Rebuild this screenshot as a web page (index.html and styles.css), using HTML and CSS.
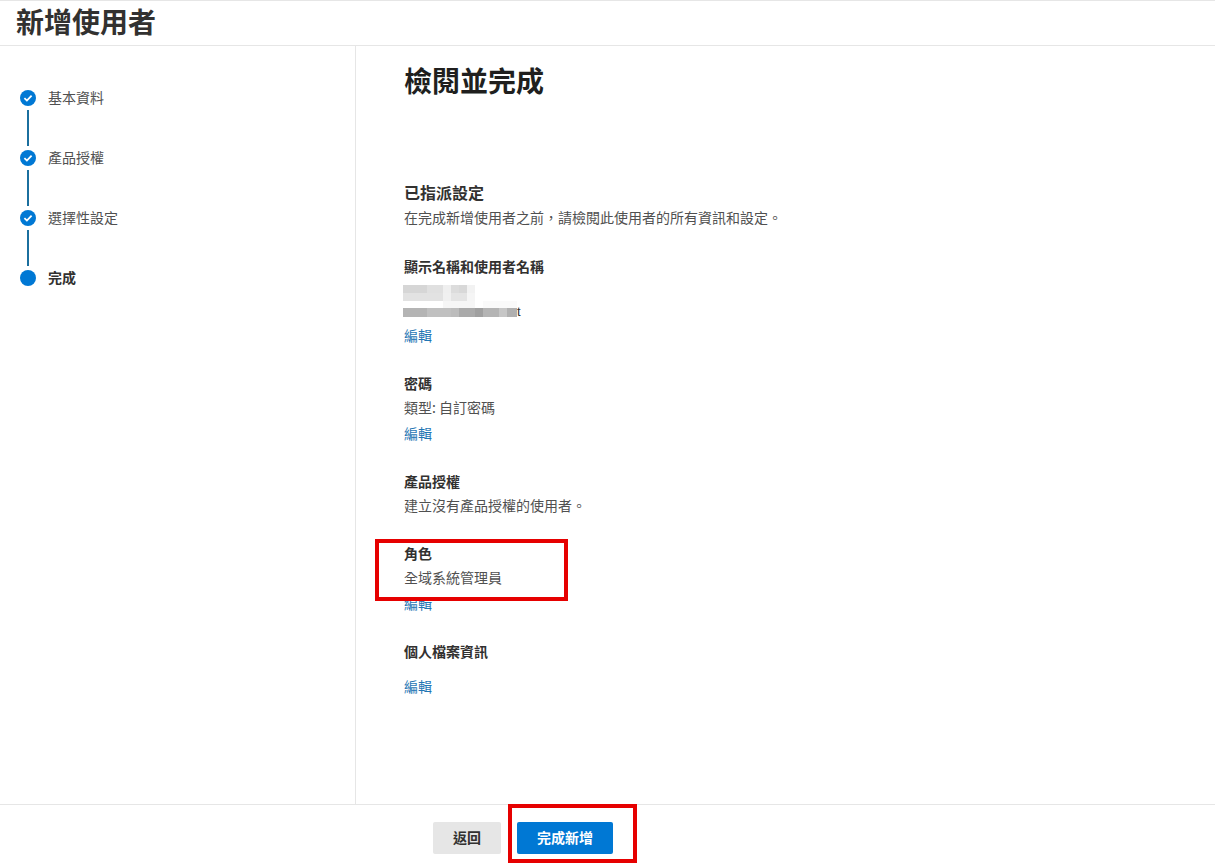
FILE: index.html
```html
<!DOCTYPE html>
<html lang="zh-Hant">
<head>
    <meta charset="UTF-8">
    <meta name="viewport" content="width=device-width, initial-scale=1.0">
    <title>新增使用者</title>
    <link rel="stylesheet" href="styles.css">
</head>
<body>
    <header class="topbar">
        <h1>新增使用者</h1>
    </header>

    <div class="wrapper">
        <aside class="sidebar">
            <ol class="steps">
                <li class="step done">
                    <span class="dot"><svg viewBox="0 0 16 16" width="16" height="16"><path d="M4.4 8.2l2.5 2.4 4.7-4.9" fill="none" stroke="#fff" stroke-width="1.8"/></svg></span>
                    <span class="step-label">基本資料</span>
                </li>
                <li class="step done">
                    <span class="dot"><svg viewBox="0 0 16 16" width="16" height="16"><path d="M4.4 8.2l2.5 2.4 4.7-4.9" fill="none" stroke="#fff" stroke-width="1.8"/></svg></span>
                    <span class="step-label">產品授權</span>
                </li>
                <li class="step done">
                    <span class="dot"><svg viewBox="0 0 16 16" width="16" height="16"><path d="M4.4 8.2l2.5 2.4 4.7-4.9" fill="none" stroke="#fff" stroke-width="1.8"/></svg></span>
                    <span class="step-label">選擇性設定</span>
                </li>
                <li class="step current">
                    <span class="dot"></span>
                    <span class="step-label">完成</span>
                </li>
            </ol>
        </aside>

        <main class="content">
            <h2>檢閱並完成</h2>

            <h3>已指派設定</h3>
            <p>在完成新增使用者之前，請檢閱此使用者的所有資訊和設定。</p>

            <section class="block first">
                <h4>顯示名稱和使用者名稱</h4>
                <div class="blur-name"></div>
                <div class="blur-mail"><span class="blur-bar"></span><span class="blur-end">t</span></div>
                <a class="edit" href="#">編輯</a>
            </section>

            <section class="block">
                <h4>密碼</h4>
                <p>類型: 自訂密碼</p>
                <a class="edit" href="#">編輯</a>
            </section>

            <section class="block">
                <h4>產品授權</h4>
                <p>建立沒有產品授權的使用者。</p>
            </section>

            <section class="block">
                <h4>角色</h4>
                <p>全域系統管理員</p>
                <a class="edit" href="#">編輯</a>
            </section>

            <section class="block">
                <h4>個人檔案資訊</h4>
                <a class="edit spaced" href="#">編輯</a>
            </section>
        </main>
    </div>

    <footer class="actions">
        <button class="btn">返回</button>
        <button class="btn primary">完成新增</button>
    </footer>

    <div class="mark mark-role"></div>
    <div class="mark mark-finish"></div>
</body>
</html>
```

FILE: styles.css
```css
* {
    box-sizing: border-box;
}
html, body {
    height: 100%;
}
body {
    font-family: "Noto Sans CJK TC", "Noto Sans", sans-serif;
    margin: 0;
    background: white;
    color: #323130;
    font-size: 14px;
    display: flex;
    flex-direction: column;
    overflow: hidden;
    position: relative;
}
.topbar {
    height: 46px;
    border-top: 1px solid #e6e6e6;
    border-bottom: 1px solid #e6e6e6;
    padding-left: 16px;
    flex: none;
}
.topbar h1 {
    margin: 0;
    font-size: 28px;
    line-height: 40px;
    font-weight: 700;
}
.wrapper {
    display: flex;
    flex: 1;
    min-height: 0;
}
.sidebar {
    width: 356px;
    flex: none;
    border-right: 1px solid #e6e6e6;
    padding: 44px 0 0 20px;
}
.steps {
    list-style: none;
    margin: 0;
    padding: 0;
}
.step {
    display: flex;
    align-items: flex-start;
    gap: 12px;
    height: 60px;
    position: relative;
}
.step-label {
    line-height: 14px;
    color: #505050;
}
.dot {
    width: 16px;
    height: 16px;
    border-radius: 50%;
    background: #0078d4;
    display: block;
    flex: none;
}
.dot svg {
    display: block;
}
.step.done::after {
    content: "";
    position: absolute;
    left: 7px;
    top: 20px;
    width: 2px;
    height: 36px;
    background: #1b6f9e;
}
.step.current .step-label {
    font-weight: 700;
    color: #323130;
}
.content {
    flex: 1;
    padding: 15px 0 0 48px;
}
.content h2 {
    margin: 0;
    font-size: 28px;
    line-height: 38px;
    font-weight: 700;
    color: #201f1e;
}
.content h3 {
    margin: 81px 0 1px;
    font-size: 16px;
    line-height: 24px;
    font-weight: 700;
}
.content p {
    margin: 0;
    line-height: 24px;
    color: #505050;
}
.block {
    margin-top: 24px;
}
.block.first {
    margin-top: 25px;
}
.block h4 {
    margin: 0;
    font-size: 14px;
    line-height: 24px;
    font-weight: 700;
}
.edit {
    display: block;
    margin-top: 2px;
    line-height: 24px;
    color: #1f76b4;
    text-decoration: none;
}
.edit.spaced {
    margin-top: 11px;
}
.blur-name {
    width: 72px;
    height: 16px;
    margin: 7px 0 0 -1px;
    background:
        linear-gradient(90deg, #d6d6d6 0 24px, #e0e0e0 24px 40px, #efefef 40px 48px, #dcdcdc 48px 56px, #d8d8d8 56px 64px, #f2f2f2 64px 72px) 0 0 / 100% 8px no-repeat,
        linear-gradient(90deg, #e2e2e2 0 40px, #f0f0f0 40px 48px, #e4e4e4 48px 64px, #f5f5f5 64px 72px) 0 8px / 100% 8px no-repeat;
}
.blur-mail {
    display: flex;
    align-items: flex-start;
    height: 20px;
    margin-left: -1px;
    background: linear-gradient(90deg, #fff 0 40px, #f6f6f6 40px 72px, #fff 72px 80px, #fafafa 80px 114px, #fff 114px) 0 0 / 100% 7px no-repeat;
}
.blur-bar {
    width: 114px;
    height: 9px;
    margin-top: 7px;
    background: linear-gradient(90deg, #b4b4b4 0 24px, #c0c0c0 24px 48px, #bcbcbc 48px 56px, #aaaaaa 56px 72px, #a0a0a0 72px 80px, #b4b4b4 80px 96px, #c6c6c6 96px 104px, #b0b0b0 104px 114px);
}
.blur-end {
    font-size: 13px;
    line-height: 14px;
    margin-top: 4px;
    font-family: "Liberation Sans", sans-serif;
}
.actions {
    height: 61px;
    flex: none;
    border-top: 1px solid #e6e6e6;
    padding: 17px 0 0 433px;
    display: flex;
    align-items: flex-start;
    gap: 16px;
}
.btn {
    height: 32px;
    width: 68px;
    border: none;
    border-radius: 2px;
    background: #e6e6e6;
    color: #323130;
    font-family: inherit;
    font-size: 14px;
    font-weight: 700;
    padding: 0 0 2px;
    cursor: pointer;
}
.btn.primary {
    width: 96px;
    background: #0078d4;
    color: white;
}
/* red boxes drawn over the screenshot */
.mark {
    position: absolute;
    border: 4px solid #e60000;
}
.mark-role {
    left: 375px;
    top: 539px;
    width: 193px;
    height: 62px;
}
.mark-finish {
    left: 508px;
    top: 804px;
    width: 129px;
    height: 59px;
}
```
